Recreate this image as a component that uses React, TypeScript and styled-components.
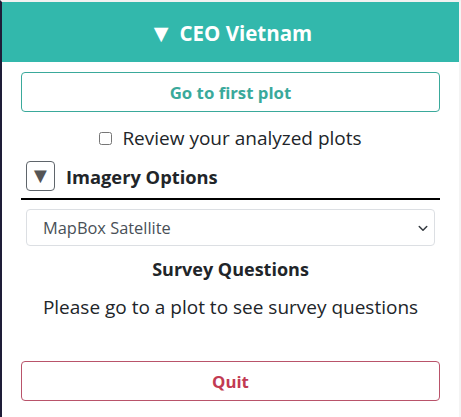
import React, { useState } from 'react';
import styled, { createGlobalStyle } from 'styled-components';

const GlobalStyle = createGlobalStyle`
  html, body {
    margin: 0;
    padding: 0;
    background: #ffffff;
  }
  body {
    font-family: "Open Sans", "Noto Sans", sans-serif;
    color: #212529;
  }
`;

const App: React.FC = () => {
  const [imageryOpen, setImageryOpen] = useState(true);
  const [reviewing, setReviewing] = useState(false);

  return (
    <>
      <GlobalStyle />
      <StyledSidebar>
        <StyledHeader>
          <StyledCaret>▼</StyledCaret>CEO Vietnam
        </StyledHeader>
        <StyledBody>
          <StyledOutlineButton tone="#3aa99b">Go to first plot</StyledOutlineButton>
          <StyledCheckRow>
            <input
              type="checkbox"
              checked={reviewing}
              onChange={() => setReviewing(!reviewing)}
            />
            Review your analyzed plots
          </StyledCheckRow>
          <StyledSection>
            <StyledSectionTitle>
              <StyledToggle onClick={() => setImageryOpen(!imageryOpen)}>
                {imageryOpen ? '▼' : '▶'}
              </StyledToggle>
              Imagery Options
            </StyledSectionTitle>
            {imageryOpen && (
              <StyledSelectWrap>
                <StyledSelect defaultValue="MapBox Satellite">
                  <option>MapBox Satellite</option>
                </StyledSelect>
                <StyledChevron viewBox="0 0 16 16">
                  <path d="M3 6l5 5 5-5" fill="none" stroke="#343a40" strokeWidth="2" strokeLinecap="round" strokeLinejoin="round" />
                </StyledChevron>
              </StyledSelectWrap>
            )}
          </StyledSection>
          <StyledSubTitle>Survey Questions</StyledSubTitle>
          <StyledNote>Please go to a plot to see survey questions</StyledNote>
          <StyledOutlineButton tone="#c23a52" borderTone="#b9536a">Quit</StyledOutlineButton>
        </StyledBody>
      </StyledSidebar>
    </>
  );
};

const StyledSidebar = styled.div`
  height: 417px;
  box-sizing: border-box;
  border-left: 2px solid #1e1d38;
  border-right: 2px solid #f4f4f4;
  border-top: 2px solid #f1f1f1;
  display: flex;
  flex-direction: column;
`;

const StyledHeader = styled.div`
  height: 59px;
  background-color: #32b8ac;
  color: #ffffff;
  font-weight: 700;
  font-size: 20.5px;
  display: flex;
  align-items: center;
  justify-content: center;
  padding-top: 1px;
`;

const StyledCaret = styled.span`
  font-size: 25px;
  margin-right: 6px;
  line-height: 1;
`;

const StyledBody = styled.div`
  padding: 10px 19px 0;
  display: flex;
  flex-direction: column;
`;

const StyledOutlineButton = styled.button<{ tone: string; borderTone?: string }>`
  height: 40px;
  width: 100%;
  background: #ffffff;
  border: 1px solid ${p => p.borderTone || p.tone};
  border-radius: 4px;
  color: ${p => p.tone};
  font-family: inherit;
  font-weight: 700;
  font-size: 16.8px;
  cursor: pointer;

  &:last-child {
    margin-top: 41px;
  }
`;

const StyledCheckRow = styled.label`
  display: flex;
  align-items: center;
  justify-content: center;
  gap: 10px;
  font-size: 19px;
  margin-top: 12px;
  height: 28px;

  input {
    width: 13px;
    height: 13px;
    margin: 0;
  }
`;

const StyledSection = styled.div`
  margin-top: 9px;
  display: flex;
  flex-direction: column;
`;

const StyledSectionTitle = styled.div`
  display: flex;
  align-items: center;
  gap: 11px;
  padding: 0 5px 7px;
  border-bottom: 2px solid #000000;
  font-weight: 700;
  font-size: 18.3px;
`;

const StyledToggle = styled.button`
  width: 29px;
  height: 30px;
  padding: 0;
  background: #ffffff;
  border: 1px solid #5f656b;
  border-radius: 4px;
  color: #555555;
  font-size: 22px;
  line-height: 1;
  cursor: pointer;
`;

const StyledSelectWrap = styled.div`
  position: relative;
  margin: 9px 5px 0;
`;

const StyledSelect = styled.select`
  width: 100%;
  height: 37px;
  appearance: none;
  background: #ffffff;
  border: 1px solid #dcdfe3;
  border-radius: 4px;
  padding: 0 16px;
  font-family: inherit;
  font-size: 16.4px;
  color: #495057;
`;

const StyledChevron = styled.svg`
  position: absolute;
  right: 6px;
  top: 13px;
  width: 12px;
  height: 12px;
  pointer-events: none;
`;

const StyledSubTitle = styled.div`
  text-align: center;
  font-weight: 700;
  font-size: 18px;
  margin-top: 11px;
`;

const StyledNote = styled.div`
  text-align: center;
  font-size: 19px;
  margin-top: 13px;
`;

export default App;
